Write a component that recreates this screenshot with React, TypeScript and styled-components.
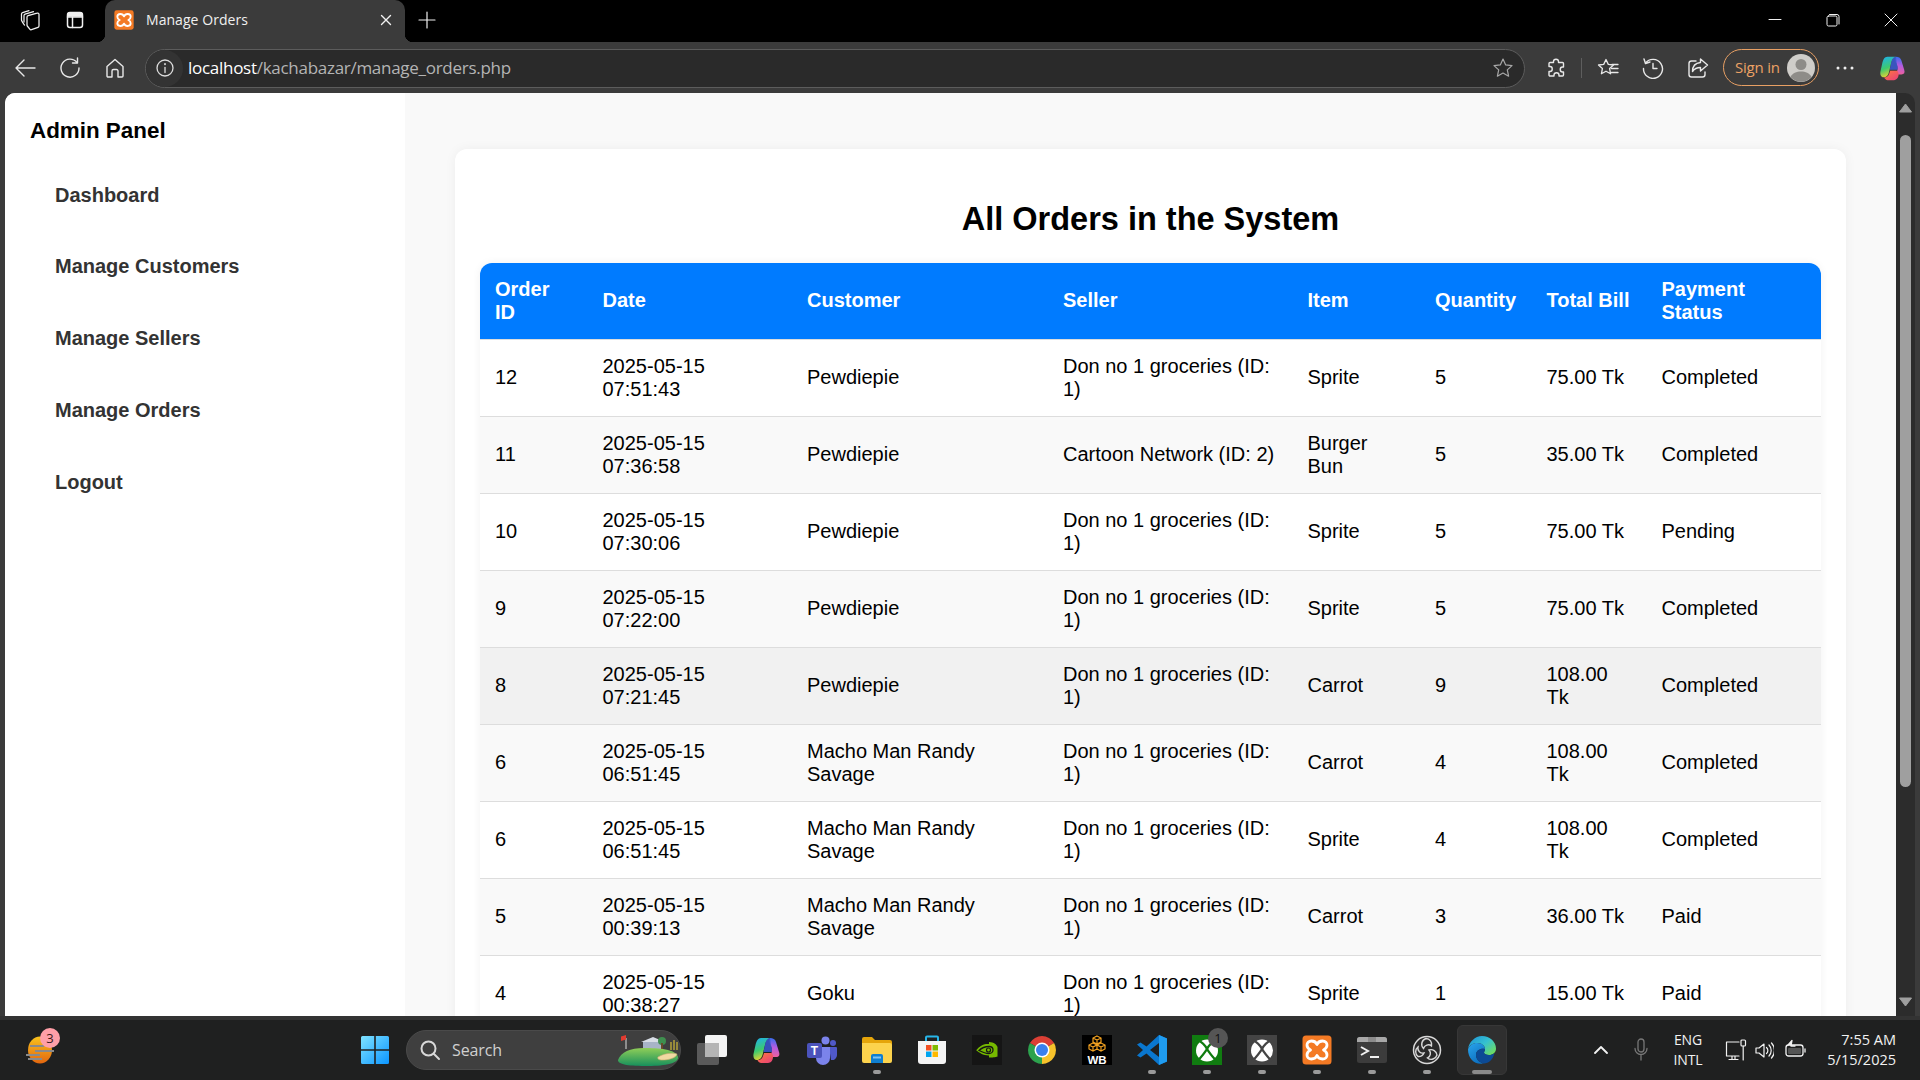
import React from "react";
import styled, { createGlobalStyle } from "styled-components";

const Global = createGlobalStyle`
  html, body { margin: 0; padding: 0; background: #000; overflow: hidden; }
  * { box-sizing: border-box; }
`;

const UI = `"Open Sans", "Noto Sans", sans-serif`;

const Screen = styled.div`
  width: 1920px; height: 1080px; display: flex; flex-direction: column; overflow: hidden;
  font-family: "Liberation Sans", Arial, sans-serif;
`;

/* ---------- browser chrome ---------- */
const TabStrip = styled.header`
  height: 42px; flex: none; background: #000; display: flex; align-items: stretch; padding-left: 7.5px; color: #f2f2f2;
`;
const StripButton = styled.div<{ $w?: number }>`
  width: ${p => p.$w ?? 45}px; display: flex; align-items: center; justify-content: center; color: #f0f0f0; padding-bottom: 2px;
`;
const Tab = styled.div`
  position: relative; width: 300px; margin-left: 7.5px; background: #3b3b3b; border-radius: 10px 10px 0 0;
  display: flex; align-items: center; padding: 0 13px 3px 9px; gap: 12px;
  &::before, &::after { content: ""; position: absolute; bottom: 0; width: 8px; height: 8px; }
  &::before { left: -8px; background: radial-gradient(circle at 0 0, #000 8px, #3b3b3b 8.5px); }
  &::after { right: -8px; background: radial-gradient(circle at 100% 0, #000 8px, #3b3b3b 8.5px); }
`;
const TabTitle = styled.span`
  flex: 1; font: 400 14px ${UI}; color: #f0f0f0; letter-spacing: 0.05px; white-space: nowrap;
`;
const Spacer = styled.div` flex: 1; `;

const Toolbar = styled.div`
  height: 51px; flex: none; background: #3b3b3b; display: flex; align-items: center; padding-left: 2.5px; color: #e8e8e8;
`;
const ToolButton = styled.div<{ $ml?: number; $w?: number }>`
  width: ${p => p.$w ?? 44}px; height: 36px; margin-left: ${p => p.$ml ?? 0}px; flex: none;
  display: flex; align-items: center; justify-content: center;
`;
const NavButton = styled(ToolButton)` width: 45px; `;
const AddressBar = styled.div`
  width: 1380px; height: 39px; margin-left: 7.5px; margin-top: 1px; flex: none; background: #2a2a2a; border: 1px solid #5c5c5c; border-radius: 20px;
  display: flex; align-items: center; padding: 0 10px 0 0;
`;
const InfoBadge = styled.div`
  width: 37px; height: 37px; border-radius: 50%; background: #333; display: flex; align-items: center; justify-content: center; flex: none; margin-right: 5px; color: #ddd;
`;
const Url = styled.div`
  flex: 1; font: 400 17px ${UI}; color: #b4b4b4; letter-spacing: -0.28px; white-space: nowrap; padding-bottom: 2px;
  b { font-weight: 400; color: #fff; }
`;
const Divider = styled.div`
  width: 1px; height: 20px; background: #5e5e5e; margin-left: 3px; flex: none;
`;
const SignIn = styled.div`
  width: 96px; height: 37px; margin-left: 3px; flex: none; border: 1px solid #e8a064; border-radius: 19px; color: #eda265;
  display: flex; align-items: center; justify-content: space-between; padding: 0 3px 0 11px; font: 400 15px ${UI}; letter-spacing: -0.2px;
`;
const SignLabel = styled.span` margin-bottom: 2px; `;

/* ---------- viewport ---------- */
const Viewport = styled.div`
  flex: 1; min-height: 0; background: #3b3b3b; display: flex; padding: 0 5px;
`;
const Page = styled.div`
  width: 1891px; flex: none; background: #f9f9f9; border-radius: 10px 0 0 0; overflow: hidden; display: flex; color: #000;
`;
const Scrollbar = styled.div`
  width: 19px; flex: none; background: #2c2c2c; border-radius: 0 10px 0 0; display: flex; flex-direction: column; align-items: center; padding: 10px 0 9px;
`;
const Thumb = styled.div`
  width: 11px; height: 652px; background: #9f9f9f; border-radius: 6px; margin-top: 22px; margin-left: -1px;
`;
const ArrowDown = styled.svg` margin-top: auto; `;

const Sidebar = styled.aside`
  width: 400px; flex: none; background: #fff; padding: 25px;
`;
const Brand = styled.h2`
  margin: 0 0 27px; font-size: 22.4px; line-height: 26px; font-weight: 700; color: #000;
`;
const NavList = styled.nav`
  display: flex; flex-direction: column; gap: 23.75px;
`;
const NavLink = styled.a`
  display: block; padding: 12.5px 25px; font-size: 20px; line-height: 23px; font-weight: 700; color: #333;
`;

const Main = styled.main`
  flex: 1; min-width: 0; padding: 56px 50px 0;
`;
const Card = styled.section`
  background: #fff; border-radius: 12px; padding: 25px; box-shadow: 0 0 12px rgba(0,0,0,.05);
`;
const Title = styled.h1`
  margin: 27px 0 25px; text-align: center; font-size: 32.5px; line-height: 37px; font-weight: 700; color: #000;
`;
const TableWrap = styled.div`
  border-radius: 12px 12px 0 0; overflow: hidden; box-shadow: 0 0 8px rgba(0,0,0,.06);
`;
const Table = styled.table`
  width: 100%; table-layout: fixed; border-collapse: separate; border-spacing: 0; font-size: 20px; line-height: 23px;
`;
const Col = styled.col<{ $w: number }>` width: ${p => p.$w}px; `;
const Th = styled.th`
  background: #007bff; color: #fff; font-weight: 700; text-align: left; padding: 14.75px 15px 15.25px; border-bottom: 1px solid #ddd;
`;
const Row = styled.tr<{ $tone: string }>`
  background: ${p => p.$tone};
`;
const Td = styled.td`
  padding: 14.75px 15px 15.25px; border-bottom: 1px solid #ddd; color: #000;
`;

/* ---------- taskbar ---------- */
const Taskbar = styled.footer`
  height: 64px; flex: none; background: #1f2020; border-top: 4px solid #333; display: flex; align-items: stretch; padding-left: 25px; color: #fff;
  font-family: ${UI};
`;
const Slot = styled.div<{ $active?: boolean }>`
  position: relative; width: 55px; flex: none; display: flex; flex-direction: column; align-items: center; padding-top: 15px;
  &::before {
    content: ""; display: ${p => (p.$active ? "block" : "none")}; position: absolute; left: 2.5px; right: 2.5px; top: 5px; bottom: 5px;
    background: #2f2f2f; border-radius: 6px; border: 1px solid #373737;
  }
  & > svg, & > div { position: relative; }
`;
const Pip = styled.div<{ $on?: boolean; $wide?: boolean }>`
  width: ${p => (p.$wide ? 20 : 8)}px; height: 4px; margin-top: 5px; border-radius: 2px; background: ${p => (p.$on ? (p.$wide ? "#8a8a8a" : "#9a9a9a") : "transparent")};
`;
const WidgetSlot = styled.div`
  position: relative; width: 30px; height: 30px; margin-top: 15px; flex: none;
`;
const Badge = styled.div<{ $bg: string; $fg: string; $top: number; $right: number }>`
  position: absolute !important; top: ${p => p.$top}px; right: ${p => p.$right}px; width: 20px; height: 20px; border-radius: 50%;
  background: ${p => p.$bg}; color: ${p => p.$fg}; font: 400 13px/20px ${UI}; text-align: center;
`;
const StartButton = styled.div`
  margin: 15px 0 0 305px; width: 30px; height: 30px; flex: none;
`;
const SearchPill = styled.div`
  width: 275px; height: 40px; margin: 10px 0 0 16px; flex: none; border-radius: 20px; background: #3f3f3f; border: 1px solid #4a4a4a;
  display: flex; align-items: center; padding-left: 12px; gap: 11px; font: 400 16px ${UI}; color: #d0d0d0; letter-spacing: -.1px;
`;
const SearchLabel = styled.span` flex: 1; `;
const AppRow = styled.div` display: flex; margin-left: 3px; `;
const TrayIcon = styled.div<{ $ml: number; $w: number }>`
  width: ${p => p.$w}px; margin-left: ${p => p.$ml}px; flex: none; display: flex; align-items: center; justify-content: center; color: #f2f2f2;
`;
const Lang = styled.div`
  width: 40px; margin-left: 20px; flex: none; align-self: center; text-align: center; font-size: 14px; line-height: 20px; letter-spacing: -.1px; color: #f2f2f2; margin-top: -1px;
`;
const Clock = styled.div`
  margin-left: auto; margin-right: 24px; align-self: center; text-align: right; font-size: 14.5px; line-height: 20px; color: #f2f2f2; margin-top: -1px;
`;

/* ---------- icons ---------- */
const S = (p: React.SVGProps<SVGSVGElement> & { s?: number; h?: number; sw?: number }) => {
  const { s = 20, h, sw = 1.3, children, ...rest } = p;
  return (
    <svg width={s} height={h ?? s} viewBox={`0 0 ${s} ${h ?? s}`} fill="none" stroke="currentColor" strokeWidth={sw} strokeLinecap="round" strokeLinejoin="round" {...rest}>
      {children}
    </svg>
  );
};

const Xampp = ({ s = 20 }: { s?: number }) => (
  <svg width={s} height={s} viewBox="0 0 30 30">
    <rect x="0.500" y="0.500" width="29" height="29" rx="3.500" fill="#f47a24" />
    <path d="M15 9.500C14 7 12 6 9.500 6 6.500 6 5 8 5 10 5 12 6.500 14 8.500 15 6.500 16 5 18 5 20 5 22 6.500 24 9.500 24 12 24 14 23 15 20.500 16 23 18 24 20.500 24 23.500 24 25 22 25 20 25 18 23.500 16 21.500 15 23.500 14 25 12 25 10 25 8 23.500 6 20.500 6 18 6 16 7 15 9.500z" fill="none" stroke="#fff" strokeWidth="2.800" strokeLinejoin="round" />
  </svg>
);

const Copilot = ({ s = 30, id }: { s?: number; id: string }) => (
  <svg width={s} height={s} viewBox="0 0 30 30">
    <defs>
      <linearGradient id={id + "a"} x1="0.2" y1="0" x2="0.5" y2="1">
        <stop offset="0" stopColor="#1fb3e8" /><stop offset=".55" stopColor="#3ec96e" /><stop offset="1" stopColor="#f6d32d" />
      </linearGradient>
      <linearGradient id={id + "b"} x1="0.6" y1="0" x2="0.5" y2="1">
        <stop offset="0" stopColor="#2f6ff0" /><stop offset=".5" stopColor="#b45ce0" /><stop offset="1" stopColor="#f0609a" />
      </linearGradient>
      <linearGradient id={id + "c"} x1="0" y1="0" x2="1" y2="1">
        <stop offset="0" stopColor="#ff7a3d" /><stop offset="1" stopColor="#e83e7a" />
      </linearGradient>
    </defs>
    <path d="M9 3h9c-3 1-4 3-5 7l-2.500 10c-.7 2.500-2.500 5-5.500 5-3 0-4-3-3.500-6l2-9C4.500 6 6 3 9 3z" fill={`url(#${id}a)`} />
    <path d="M18 3c3 0 5 1 6 4l3 10c1 3 0 5-3 5h-6l1.500-4c1-3 0-6-1-8-.8-2-1.500-5.500-.5-7z" fill={`url(#${id}b)`} />
    <path d="M21 22c0 3-2 6-5 6H9c-1 0-3-1-3.500-3 2.500.5 4.500-1 5.500-4l1-3h7c1 0 2 2 2 4z" fill={`url(#${id}c)`} />
    <path d="M13 10c.8-4 2.500-7 5-7 1 3 .5 6 1.500 9 .5 1.500.8 3 .3 5H11.500z" fill="#3b5bd6" opacity=".85" />
  </svg>
);

const WindowsLogo = () => (
  <svg width="30" height="30" viewBox="0 0 30 30">
    <defs>
      <linearGradient id="win" x1="0" y1="0" x2="1" y2="1">
        <stop offset="0" stopColor="#7fe3ff" /><stop offset="1" stopColor="#0b95ff" />
      </linearGradient>
    </defs>
    <path d="M1 2.500A1.500 1.500 0 0 1 2.500 1h11.700v13.200H1zM15.800 1h11.700A1.500 1.500 0 0 1 29 2.500v11.700H15.800zM1 15.800h13.200V29H2.500A1.500 1.500 0 0 1 1 27.500zM15.800 15.800H29v11.700a1.500 1.500 0 0 1-1.500 1.500H15.800z" fill="url(#win)" />
  </svg>
);

const Golf = () => (
  <svg width="64" height="36" viewBox="0 0 64 36">
    <defs>
      <linearGradient id="hill" x1="0" y1="0" x2="0" y2="1">
        <stop offset="0" stopColor="#8fce58" /><stop offset="1" stopColor="#17905c" />
      </linearGradient>
    </defs>
    <rect x="27" y="10" width="20" height="7" fill="#a8b4c8" />
    <path d="M25 10l12-5 12 5z" fill="#d8dde6" />
    <circle cx="46" cy="9" r="4" fill="#3f8f4f" /><rect x="45" y="11" width="2" height="7" fill="#6b4a2b" />
    <path d="M55 10v8M58 8v10M61 10v8" stroke="#b5a33a" strokeWidth="1.500" />
    <path d="M10 6v11" stroke="#ddd" strokeWidth="1" /><path d="M10 3l-5 1.500V9l5-1.500z" fill="#e23b30" />
    <path d="M2 28C5 20 14 16 28 16s32 1 34 9c1 6-12 9-30 9C14 34 2 33 2 28z" fill="url(#hill)" />
    <path d="M42 25c5-3 13-5 19-3-1 4-8 6-15 6-3 0-5-1-4-3z" fill="#f1d9a3" stroke="#c9a96e" strokeWidth=".6" />
  </svg>
);

const Folder = () => (
  <svg width="30" height="30" viewBox="0 0 30 30">
    <path d="M0 4a2 2 0 0 1 2-2h8l3 3h15a2 2 0 0 1 2 2v3H0z" fill="#e5a50a" />
    <path d="M0 8h28a2 2 0 0 1 2 2v16a2 2 0 0 1-2 2H2a2 2 0 0 1-2-2z" fill="#fcd34d" />
    <path d="M9 21a2 2 0 0 1 2-2h8a2 2 0 0 1 2 2v7H9z" fill="#0f7fd0" />
    <rect x="11" y="21.500" width="8" height="2" fill="#7cc4f5" />
  </svg>
);

const Store = () => (
  <svg width="30" height="30" viewBox="0 0 30 30">
    <path d="M9 6V2.500a1 1 0 0 1 1-1h10a1 1 0 0 1 1 1V6" fill="none" stroke="#27b5e8" strokeWidth="2" />
    <path d="M1 6h28v20a3 3 0 0 1-3 3H4a3 3 0 0 1-3-3z" fill="#f4f4f4" />
    <rect x="9" y="10" width="5.500" height="5.500" fill="#f25022" /><rect x="15.500" y="10" width="5.500" height="5.500" fill="#7fba00" />
    <rect x="9" y="16.500" width="5.500" height="5.500" fill="#00a4ef" /><rect x="15.500" y="16.500" width="5.500" height="5.500" fill="#ffb900" />
  </svg>
);

const Nvidia = () => (
  <svg width="30" height="30" viewBox="0 0 30 30">
    <rect width="30" height="30" fill="#151515" />
    <path d="M4 15.500C8 10 13 8.500 17 9v-2c5 0 8 3 8.500 5v9.500c-1 .5-3 1-8.500 1v-2c-6 0-10-3-13-5.500z" fill="#76b900" />
    <path d="M7 15.500c3-3 6-4 10-4 3 0 4 2 4 3.500 0 2-2 3.500-4 3.500-4 0-7-1.500-10-3z" fill="none" stroke="#151515" strokeWidth="1.300" />
    <circle cx="16.500" cy="15" r="2" fill="none" stroke="#151515" strokeWidth="1.200" />
  </svg>
);

const Chrome = () => (
  <svg width="30" height="30" viewBox="0 0 30 30">
    <path d="M15 15 2.900 8A14 14 0 0 1 27.100 8z" fill="#db3f35" />
    <path d="M15 15 27.100 8A14 14 0 0 1 15 29z" fill="#f7c32b" />
    <path d="M15 15 15 29A14 14 0 0 1 2.900 8z" fill="#2ca24d" />
    <circle cx="15" cy="15" r="7.500" fill="#fff" /><circle cx="15" cy="15" r="6" fill="#3a80ee" />
  </svg>
);

const WB = () => (
  <svg width="30" height="30" viewBox="0 0 30 30">
    <rect width="30" height="30" fill="#000" />
    <path d="M15 1l4 2v4l-4 2-4-2V3zM11 8l4 2v4l-4 2-4-2v-4zM19 8l4 2v4l-4 2-4-2v-4zM11 3l4 2 4-2M7 10l4 2 4-2 4 2 4-2M15 5v4M11 12v4M19 12v4" fill="none" stroke="#f0a020" strokeWidth="1.200" />
    <text x="15" y="28.500" textAnchor="middle" fontFamily="Liberation Sans" fontWeight="700" fontSize="11.500" fill="#fff">WB</text>
  </svg>
);

const VSCode = () => (
  <svg width="30" height="30" viewBox="0 0 30 30">
    <path d="M22 0 9.500 11.500 3.500 7.500 0 9.500 6 15l-6 5.500 3.500 2 6-4L22 30l8-3.500v-23z" fill="#0a77cf" />
    <path d="M22 0l8 3.500v23L22 30z" fill="#1f9cf0" />
    <path d="M22 8 13 15l9 7z" fill="#1f2020" />
  </svg>
);

const Xbox = ({ bg }: { bg: string }) => (
  <svg width="30" height="30" viewBox="0 0 30 30">
    <rect width="30" height="30" fill={bg} />
    <circle cx="15" cy="15.500" r="11" fill="#fff" />
    <path d="M5.500 5Q12 8 15 14Q18 19 24.500 26M24.500 5Q18 8 15 14Q12 19 5.500 26" stroke={bg} strokeWidth="2.400" fill="none" />
  </svg>
);

const Terminal = () => (
  <svg width="30" height="30" viewBox="0 0 30 30">
    <rect y="2" width="30" height="26" rx="2.500" fill="#3c3c3c" />
    <path d="M0 4.500A2.500 2.500 0 0 1 2.500 2h25A2.500 2.500 0 0 1 30 4.500V7H0z" fill="#a8a8a8" />
    <rect x="11" y="2" width="8" height="5" fill="#8c8c8c" />
    <path d="M4 12l7 4-7 4" fill="none" stroke="#f2f2f2" strokeWidth="2" />
    <path d="M13 22h9" stroke="#f2f2f2" strokeWidth="2" />
  </svg>
);

const OBS = () => (
  <svg width="30" height="30" viewBox="0 0 30 30">
    <circle cx="15" cy="15" r="13.500" fill="#2a2a2a" stroke="#d8d8d8" strokeWidth="1.500" />
    <path d="M14 3.500a6 6 0 0 1 5.500 7.500 5 5 0 0 0-8 2.500 6 6 0 0 1 2.500-10zM25 20a6 6 0 0 1-9.500 3 5 5 0 0 0 1.500-8 6 6 0 0 1 8 5zM6 21.500a6 6 0 0 1 0-9.500 5 5 0 0 0 6 6 6 6 0 0 1-6 3.500z" fill="none" stroke="#d8d8d8" strokeWidth="1.400" />
  </svg>
);

const Edge = () => (
  <svg width="30" height="30" viewBox="0 0 30 30">
    <defs>
      <linearGradient id="edgeA" x1="0" y1="0" x2="1" y2=".8">
        <stop offset="0" stopColor="#1d8fd8" /><stop offset=".55" stopColor="#35c1d0" /><stop offset="1" stopColor="#6fdc5f" />
      </linearGradient>
      <linearGradient id="edgeB" x1="0" y1="0" x2=".6" y2="1">
        <stop offset="0" stopColor="#2aa5ec" /><stop offset="1" stopColor="#0c6fc0" />
      </linearGradient>
    </defs>
    <path d="M15 1c8 0 14 6 14 12.500 0 4-3 6.500-7 6.500-3 0-5-1-5-2.500 0-1 1-1.500 1-3.500 0-3-3-6-8-6-4 0-8 2.500-9 6C2 7 8 1 15 1z" fill="url(#edgeA)" />
    <path d="M1 14.500C2 10.500 6 8 10 8c5 0 8 3 8 6-4-1-9 1-9 6 0 4 3 7 7 8.500C8 30 1 24 1 14.500z" fill="url(#edgeB)" />
    <path d="M16 28.500c-4-1.500-7-4.500-7-8.500 0-5 5-7 9-6 0 2-1 2.500-1 3.500 0 1.500 2 2.500 5 2.500 2 0 4-.5 5.500-2C26 25 21 29 16 28.500z" fill="#0c4a95" />
  </svg>
);

const Teams = () => (
  <svg width="30" height="30" viewBox="0 0 30 30">
    <circle cx="18.500" cy="5.500" r="4" fill="#7b83eb" /><circle cx="26" cy="8" r="3" fill="#5059c9" />
    <path d="M22 12h7a1 1 0 0 1 1 1v7a5 5 0 0 1-6 5z" fill="#5059c9" />
    <path d="M11 12h12v11a7 7 0 0 1-14 0z" fill="#7b83eb" />
    <rect y="8" width="15" height="15" rx="2" fill="#4b53bc" />
    <text x="7.500" y="20" textAnchor="middle" fontFamily="Liberation Sans" fontWeight="700" fontSize="12" fill="#fff">T</text>
  </svg>
);

const TaskView = () => (
  <svg width="30" height="30" viewBox="0 0 30 30">
    <rect x="0" y="8" width="22" height="22" rx="2" fill="#5a5a5a" />
    <rect x="8" y="0" width="22" height="22" rx="2" fill="#f4f4f4" />
    <rect x="8" y="8" width="14" height="14" fill="#b5b5b5" />
  </svg>
);

const Widget = () => (
  <svg width="30" height="30" viewBox="0 0 30 30">
    <defs>
      <linearGradient id="sun" x1="0" y1="0" x2="0" y2="1">
        <stop offset="0" stopColor="#f8c21c" /><stop offset="1" stopColor="#e2660f" />
      </linearGradient>
    </defs>
    <ellipse cx="15" cy="15" rx="12" ry="13.500" fill="url(#sun)" />
    <path d="M5 11h14M10 16h19M1 20h14M3 24h14" stroke="#8a8a8a" strokeWidth="2" />
  </svg>
);

const Avatar = () => (
  <svg width="28" height="28" viewBox="0 0 28 28">
    <circle cx="14" cy="14" r="14" fill="#cfcdc9" />
    <circle cx="14" cy="10.500" r="5.500" fill="#8e8c88" />
    <path d="M3.500 23c2-4 6-5.500 10.500-5.500s8.500 1.500 10.500 5.500a14 14 0 0 1-21 0z" fill="#8e8c88" />
  </svg>
);

/* ---------- data ---------- */
const DON = "Don no 1 groceries (ID: 1)";
const MACHO = "Macho Man Randy Savage";
const rows = [
  ["12", "2025-05-15 07:51:43", "Pewdiepie", DON, "Sprite", "5", "75.00 Tk", "Completed"],
  ["11", "2025-05-15 07:36:58", "Pewdiepie", "Cartoon Network (ID: 2)", "Burger Bun", "5", "35.00 Tk", "Completed"],
  ["10", "2025-05-15 07:30:06", "Pewdiepie", DON, "Sprite", "5", "75.00 Tk", "Pending"],
  ["9", "2025-05-15 07:22:00", "Pewdiepie", DON, "Sprite", "5", "75.00 Tk", "Completed"],
  ["8", "2025-05-15 07:21:45", "Pewdiepie", DON, "Carrot", "9", "108.00 Tk", "Completed"],
  ["6", "2025-05-15 06:51:45", MACHO, DON, "Carrot", "4", "108.00 Tk", "Completed"],
  ["6", "2025-05-15 06:51:45", MACHO, DON, "Sprite", "4", "108.00 Tk", "Completed"],
  ["5", "2025-05-15 00:39:13", MACHO, DON, "Carrot", "3", "36.00 Tk", "Paid"],
  ["4", "2025-05-15 00:38:27", "Goku", DON, "Sprite", "1", "15.00 Tk", "Paid"],
];
const heads = ["Order ID", "Date", "Customer", "Seller", "Item", "Quantity", "Total Bill", "Payment Status"];
const widths = [107.5, 204.5, 256, 244.5, 127.5, 111.5, 115, 174.5];
const toneOf = (i: number) => (i === 4 ? "#f1f1f1" : i % 2 ? "#f9f9f9" : "#fff");

export default function App() {
  return (
    <Screen>
      <Global />
      <TabStrip>
        <StripButton>
          <S s={22} sw={1.25}>
            <path d="M8 8a1.500 1.500 0 0 1 1.100-1.400L18 4.100a1.500 1.500 0 0 1 2 1.400v11.500a1.500 1.500 0 0 1-1 1.400l-6.500 2.300a1.500 1.500 0 0 1-1.700-.5L8.300 17a1.500 1.500 0 0 1-.3-.9z" />
            <path d="M5 13V6.500a1.500 1.500 0 0 1 1.100-1.400L14.500 2.700" />
            <path d="M2.500 11V5a1.500 1.500 0 0 1 1.100-1.400L10 1.700" />
            <path d="M2.500 11c0 1 1.500 3 3 5" />
          </S>
        </StripButton>
        <StripButton>
          <S s={20} sw={1.5}><rect x="2.500" y="2.500" width="15" height="15" rx="2.500" /><path d="M2.500 7h15" /><path d="M3 6V4l1-1h12l1 1v2z" fill="currentColor" /><path d="M7.500 7v10.500" /></S>
        </StripButton>
        <Tab>
          <Xampp s={20} />
          <TabTitle>Manage Orders</TabTitle>
          <S s={12} sw={1.4}><path d="M1.500 1.500l9 9M10.500 1.500l-9 9" /></S>
        </Tab>
        <StripButton $w={44}>
          <S s={18} sw={1.2}><path d="M9 1v16M1 9h16" /></S>
        </StripButton>
        <Spacer />
        <StripButton $w={58}><S s={14} sw={1}><path d="M1 6.500h12" /></S></StripButton>
        <StripButton $w={58}><S s={14} sw={1}><rect x="1" y="3" width="10" height="10" rx="1.500" /><path d="M3.500 1.500h7.500a2 2 0 0 1 2 2v7.500" /></S></StripButton>
        <StripButton $w={58}><S s={14} sw={1}><path d="M1 1l12 12M13 1 1 13" /></S></StripButton>
      </TabStrip>

      <Toolbar>
        <NavButton><S s={22} sw={1.4}><path d="M21 11H2M10 3l-8 8 8 8" /></S></NavButton>
        <NavButton><S s={22} sw={1.4}><path d="M18 5.500A9 9 0 1 0 20 11" /><path d="M18.500 1v5h-5" /></S></NavButton>
        <NavButton><S s={22} sw={1.4}><path d="M3 9.500 11 2.500l8 7V19a1 1 0 0 1-1 1h-4v-6a1.500 1.500 0 0 0-1.500-1.500h-3A1.500 1.500 0 0 0 8 14v6H4a1 1 0 0 1-1-1z" /></S></NavButton>
        <AddressBar>
          <InfoBadge><S s={20} sw={1.3}><circle cx="10" cy="10" r="8" /><path d="M10 9.500v5" /><path d="M10 6v.3" strokeWidth={1.8} /></S></InfoBadge>
          <Url><b>localhost</b>/kachabazar/manage_orders.php</Url>
          <S s={22} sw={1.2} color="#a8a8a8"><path d="M11 2l2.700 5.900 6.300.7-4.700 4.300 1.300 6.300L11 16.100l-5.600 3.100 1.300-6.300L2 8.600l6.300-.7z" /></S>
        </AddressBar>
        <ToolButton $ml={9}><S s={22} sw={1.4}><path d="M8.500 4.500c0-3 5-3 5 0v1h4a1 1 0 0 1 1 1v3.500h-1c-3 0-3 5 0 5h1V18a1 1 0 0 1-1 1h-3.500v-1c0-3-5-3-5 0v1H5a1 1 0 0 1-1-1v-3.500h1c3 0 3-5 0-5H4V6.500a1 1 0 0 1 1-1h3.500z" /></S></ToolButton>
        <Divider />
        <ToolButton $ml={4}><S s={22} sw={1.3}><path d="M9 2.500l2.300 4.900 5.200.6-3.900 3.600 1 5.200L9 14.200l-4.600 2.600 1-5.200L1.500 8l5.200-.6z" /><path d="M15 7.500h6M14.500 11.500H21M14.500 15.500H21" /></S></ToolButton>
        <ToolButton $ml={1}><S s={22} sw={1.4}><path d="M3.500 6A9.500 9.500 0 1 1 1.500 11.500" /><path d="M2 2l1.500 4.500L8 5" /><path d="M11 6.500v5h4" /></S></ToolButton>
        <ToolButton $ml={1}><S s={22} sw={1.4}><path d="M9 4H4.500A2.500 2.500 0 0 0 2 6.500v11A2.500 2.500 0 0 0 4.500 20h11a2.500 2.500 0 0 0 2.500-2.500V15" /><path d="M13.500 2l7 6-7 6v-3.500c-3.500 0-6 1-8 4 0-5 3-8.500 8-9z" /></S></ToolButton>
        <SignIn><SignLabel>Sign in</SignLabel><Avatar /></SignIn>
        <ToolButton $ml={4}><svg width="18" height="4" viewBox="0 0 18 4"><circle cx="2" cy="2" r="1.500" fill="#eee" /><circle cx="9" cy="2" r="1.500" fill="#eee" /><circle cx="16" cy="2" r="1.500" fill="#eee" /></svg></ToolButton>
        <ToolButton $ml={4}><Copilot s={28} id="cpA" /></ToolButton>
      </Toolbar>

      <Viewport>
        <Page>
          <Sidebar>
            <Brand>Admin Panel</Brand>
            <NavList>
              {["Dashboard", "Manage Customers", "Manage Sellers", "Manage Orders", "Logout"].map(n => (
                <NavLink key={n}>{n}</NavLink>
              ))}
            </NavList>
          </Sidebar>
          <Main>
            <Card>
              <Title>All Orders in the System</Title>
              <TableWrap>
                <Table>
                  <colgroup>
                    {widths.map((w, i) => <Col key={i} $w={w} />)}
                  </colgroup>
                  <thead>
                    <tr>{heads.map(h => <Th key={h}>{h}</Th>)}</tr>
                  </thead>
                  <tbody>
                    {rows.map((r, i) => (
                      <Row key={i} $tone={toneOf(i)}>
                        {r.map((c, j) => <Td key={j}>{c}</Td>)}
                      </Row>
                    ))}
                  </tbody>
                </Table>
              </TableWrap>
            </Card>
          </Main>
        </Page>
        <Scrollbar>
          <svg width="15" height="10" viewBox="0 0 15 10"><path d="M7.500 1l6 8h-12z" fill="#9f9f9f" stroke="#9f9f9f" strokeLinejoin="round" /></svg>
          <Thumb />
          <ArrowDown width="15" height="10" viewBox="0 0 15 10"><path d="M7.500 9l6-8h-12z" fill="#9f9f9f" stroke="#9f9f9f" strokeLinejoin="round" /></ArrowDown>
        </Scrollbar>
      </Viewport>

      <Taskbar>
        <WidgetSlot>
          <Widget />
          <Badge $bg="#ff9fa8" $fg="#3a1a1a" $top={-7} $right={-5}>3</Badge>
        </WidgetSlot>
        <StartButton><WindowsLogo /></StartButton>
        <SearchPill>
          <S s={22} sw={2} color="#d8d8d8"><circle cx="9.500" cy="9.500" r="7" /><path d="M15 15l5 5" /></S>
          <SearchLabel>Search</SearchLabel>
          <Golf />
        </SearchPill>
        <AppRow>
          <Slot><TaskView /></Slot>
          <Slot><Copilot id="cpB" /></Slot>
          <Slot><Teams /></Slot>
          <Slot><Folder /><Pip $on /></Slot>
          <Slot><Store /></Slot>
          <Slot><Nvidia /></Slot>
          <Slot><Chrome /></Slot>
          <Slot><WB /></Slot>
          <Slot><VSCode /><Pip $on /></Slot>
          <Slot><Xbox bg="#107c10" /><Pip $on /><Badge $bg="#555" $fg="#111" $top={8} $right={6}>1</Badge></Slot>
          <Slot><Xbox bg="#444" /><Pip $on /></Slot>
          <Slot><Xampp s={30} /><Pip $on /></Slot>
          <Slot><Terminal /><Pip $on /></Slot>
          <Slot><OBS /><Pip $on /></Slot>
          <Slot $active><Edge /><Pip $on $wide /></Slot>
        </AppRow>
        <TrayIcon $ml={85} $w={14}><S s={14} h={10} sw={1.8}><path d="M1 8l6-6 6 6" /></S></TrayIcon>
        <TrayIcon $ml={26} $w={14}><S s={14} h={24} sw={1.3} color="#777"><rect x="4" y="1" width="6" height="13" rx="3" /><path d="M1 10.500a6 6 0 0 0 12 0M7 17v5" /></S></TrayIcon>
        <Lang>ENG<br />INTL</Lang>
        <TrayIcon $ml={16} $w={24}><S s={24} sw={1.2}><path d="M15 4H2.500v14H15M5 21.500h9M8 18v3.500M11 18v3.500" /><rect x="17" y="2" width="4.500" height="6" rx="1" /><path d="M19.200 8v14" /></S></TrayIcon>
        <TrayIcon $ml={6} $w={20}><S s={20} sw={1.2}><path d="M2 8v5h3l5 4V4L5 8z" /><path d="M12.500 7.500a4 4 0 0 1 0 6M15 5a8 8 0 0 1 0 11M17.500 3a11 11 0 0 1 0 15" /></S></TrayIcon>
        <TrayIcon $ml={9.5} $w={22}><S s={22} sw={1.3}><rect x="2" y="6" width="17" height="11" rx="2.500" /><path d="M21 10v3" /><path d="M4 6 8 1.500 7 7h4" fill="currentColor" /><rect x="4" y="9" width="13" height="6" rx="1" fill="currentColor" opacity=".25" stroke="none" /></S></TrayIcon>
        <Clock>7:55 AM<br />5/15/2025</Clock>
      </Taskbar>
    </Screen>
  );
}
